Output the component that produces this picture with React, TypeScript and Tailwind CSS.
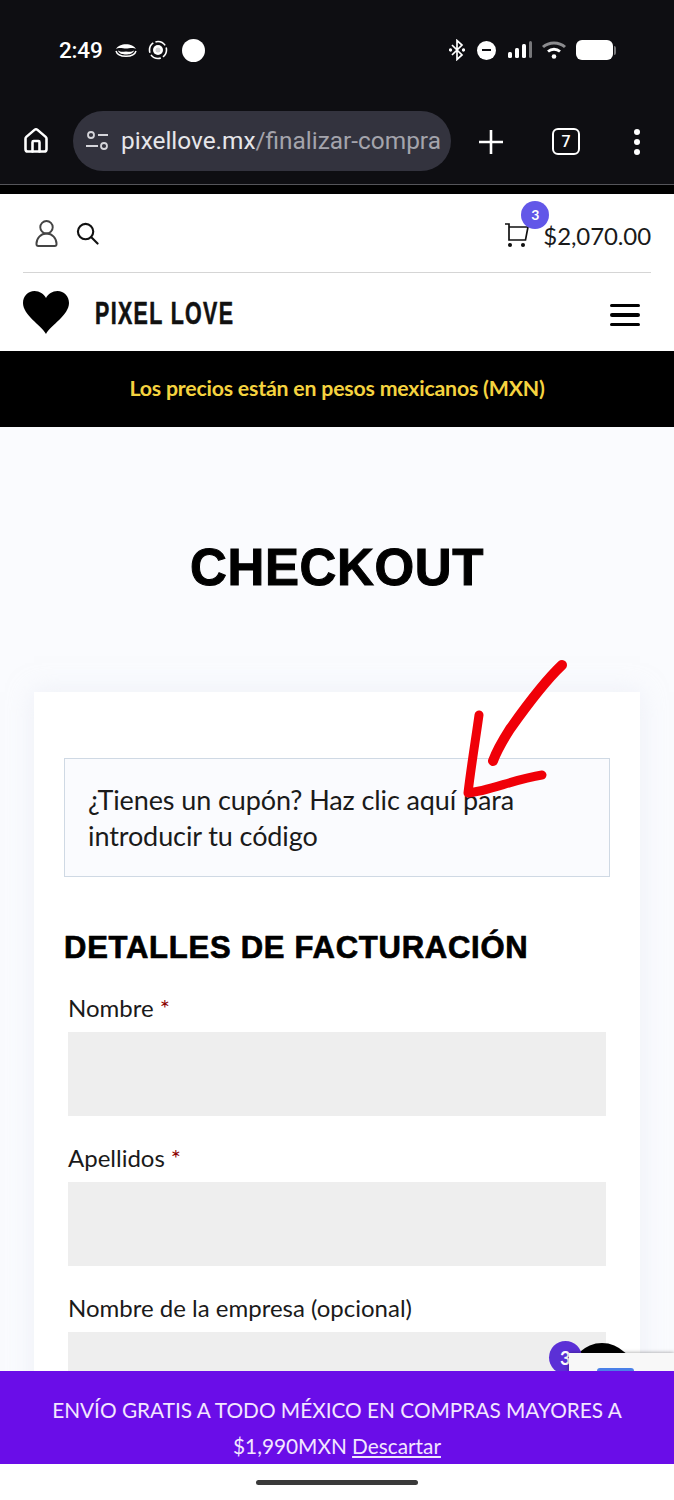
import { House } from 'lucide-react';

function StatusBar() {
  return (
    <div className="h-[100px] pl-[59px] pr-[58px] pt-[36px] flex justify-between items-start text-white">
      <div className="flex items-center h-[28px]">
        <span className="font-['Roboto',sans-serif] font-medium text-[22.500px] leading-[28px] tracking-[-0.2px]">2:49</span>
        {/* notification icons */}
        <svg className="ml-[12px]" width="22" height="16" viewBox="0 0 22 16" fill="none">
          <path d="M1 7C4 .5 18 .5 21 7 18 5 14 6.500 11 6.500 8 6.500 4 5 1 7z" fill="white" />
          <path d="M3 8.500c3 2 5 1 8 1s5 1 8-1c-1 3.500-5 4-8 4s-7-.5-8-4z" fill="white" />
          <path d="M1 9c2 7 18 7 20 0" stroke="white" strokeWidth="1.500" />
        </svg>
        <svg className="ml-[10px]" width="22" height="22" viewBox="0 0 22 22" fill="none">
          <circle cx="11" cy="11" r="5" fill="white" />
          <circle cx="11" cy="11" r="2.500" fill="#cfcfd2" />
          <circle cx="11" cy="11" r="8.500" stroke="white" strokeWidth="1.600" strokeDasharray="11 2.400" strokeDashoffset="3" />
        </svg>
        <span className="ml-[13px] w-[23px] h-[23px] rounded-full bg-white"></span>
      </div>
      <div className="flex items-center h-[28px]">
        <svg width="16" height="22" viewBox="0 0 16 22" fill="none" stroke="white" strokeWidth="1.700">
          <path d="M3 6l10 10-5 4.500V1.500L13 6 3 16" />
          <circle cx="1.500" cy="11" r="0.800" fill="white" />
          <circle cx="14.500" cy="11" r="0.800" fill="white" />
        </svg>
        <span className="ml-[12px] w-[19px] h-[19px] rounded-full bg-white flex items-center justify-center">
          <span className="w-[9px] h-[2.500px] bg-[#0e0e12]"></span>
        </span>
        <svg className="ml-[11px]" width="26" height="20" viewBox="0 0 26 20">
          <rect x="1" y="12" width="4" height="6" rx="1.500" fill="white" />
          <rect x="8" y="8" width="4" height="10" rx="1.500" fill="white" />
          <rect x="15" y="4" width="4" height="14" rx="1.500" fill="white" />
          <rect x="22" y="1" width="3" height="17" rx="1.500" fill="#77777a" />
        </svg>
        <svg className="ml-[8px]" width="26" height="20" viewBox="0 0 26 20" fill="none">
          <path d="M2 7c6-5.500 16-5.500 22 0" stroke="#8c8c8f" strokeWidth="3" />
          <path d="M7 11.500c3.500-3 8.500-3 12 0" stroke="white" strokeWidth="2.800" />
          <circle cx="13" cy="16.500" r="2.300" fill="white" />
        </svg>
        <span className="ml-[9px] w-[37px] h-[20px] rounded-[6px] bg-white"></span>
        <span className="ml-[1px] w-[2px] h-[9px] rounded-r-sm bg-[#77777a]"></span>
      </div>
    </div>
  );
}

function BrowserBar() {
  return (
    <div className="h-[85px] border-b border-[#55555a] flex items-start pt-[11px] pl-[22px]">
      <House className="mt-[16px] text-white" size={28} strokeWidth={2.200} />
      <div className="ml-[23px] w-[378px] h-[60px] rounded-full bg-[#33333e] flex items-center pl-[12px]">
        <svg width="24" height="24" viewBox="0 0 24 24" fill="none" stroke="#d5d5da" strokeWidth="1.800">
          <circle cx="6" cy="6" r="3" />
          <path d="M13 6h10M1 17h12" />
          <circle cx="19" cy="17" r="3" />
        </svg>
        <span className="ml-[12px] font-['Roboto',sans-serif] text-[24.400px] leading-[30px] whitespace-nowrap text-[#e6e6ea]">
          pixellove.mx<span className="text-[#a4a4ac]">/finalizar-compra</span>
        </span>
      </div>
      <svg className="ml-[27px] mt-[18px]" width="26" height="26" viewBox="0 0 26 26" stroke="white" strokeWidth="2.600">
        <path d="M13 1v24M1 13h24" />
      </svg>
      <span className="ml-[48px] mt-[17px] w-[28px] h-[27px] rounded-[6px] border-[2.500px] border-white flex items-center justify-center font-['Roboto',sans-serif] font-medium text-[16px] text-white">
        7
      </span>
      <div className="ml-[54px] mt-[18px] flex flex-col gap-[4px]">
        <span className="w-[6px] h-[6px] rounded-full bg-white"></span>
        <span className="w-[6px] h-[6px] rounded-full bg-white"></span>
        <span className="w-[6px] h-[6px] rounded-full bg-white"></span>
      </div>
    </div>
  );
}

function SiteHeader() {
  return (
    <div className="bg-white h-[157px] px-[23px] font-['Lato',sans-serif]">
      <div className="h-[79px] border-b border-[#d5d5d5] flex items-center justify-between">
        <div className="flex items-center pl-[12px] pt-[1px]">
          <svg width="23" height="29" viewBox="0 0 24 29" fill="none" stroke="#444" strokeWidth="2">
            <circle cx="12" cy="8" r="6.500" />
            <path d="M12 14.500c-6 0-10.500 5-10.500 11 0 1.500.5 2 2 2h17c1.500 0 2-.5 2-2 0-6-4.500-11-10.500-11z" />
          </svg>
          <svg className="ml-[18px]" width="23" height="23" viewBox="0 0 24 24" fill="none" stroke="#111" strokeWidth="2.200" strokeLinecap="round">
            <circle cx="10" cy="10" r="8" />
            <path d="M16 16l6.500 6.500" />
          </svg>
        </div>
        <div className="relative flex items-center pt-[5px]">
          <svg width="24" height="26" viewBox="0 0 24 26" fill="none" stroke="#111" strokeWidth="1.700">
            <path d="M0 1h4v16h16.500L23 4H4" />
            <circle cx="5" cy="22" r="1.200" fill="#111" />
            <circle cx="18" cy="22" r="1.200" fill="#111" />
          </svg>
          <span className="absolute left-[16px] top-[-15px] w-[28px] h-[28px] rounded-full bg-[#6257e8] flex items-center justify-center text-white text-[14px] font-bold">
            3
          </span>
          <span className="ml-[14px] text-[24px] leading-[30px] text-[#1a1a1a] tracking-[-0.1px]">$2,070.00</span>
        </div>
      </div>
      <div className="flex items-center justify-between h-[78px]">
        <div className="flex items-center">
          <svg width="46" height="43" viewBox="0 0 46 43" fill="black">
            <path d="M23 43C18 34 0 24 0 12 0 5 5 0 11.500 0 16.500 0 21 3 23 7 25 3 29.500 0 34.500 0 41 0 46 5 46 12 46 24 28 34 23 43z" />
          </svg>
          <span className="ml-[26px] mt-[3px] origin-left scale-x-[0.69] font-['Liberation_Sans',sans-serif] font-bold [-webkit-text-stroke:0.6px_#111] text-[31px] leading-[34px] tracking-[2px] text-[#111] whitespace-nowrap">
            PIXEL LOVE
          </span>
        </div>
        <div className="mr-[11px] mt-[6px] flex flex-col gap-[6px]">
          <span className="w-[30px] h-[3.500px] rounded-full bg-black"></span>
          <span className="w-[30px] h-[3.500px] rounded-full bg-black"></span>
          <span className="w-[30px] h-[3.500px] rounded-full bg-black"></span>
        </div>
      </div>
    </div>
  );
}

function Field({ label, required }: { label: string; required?: boolean }) {
  return (
    <div className="px-[4px] mb-[25px]">
      <div className="text-[24px] leading-[34px] text-[#1a1a1a] h-[36px]">
        {label}
        {required && <span className="text-[#8b0000] ml-[6px]">*</span>}
      </div>
      <div className="mt-[5px] h-[84px] bg-[#eeeeee]"></div>
    </div>
  );
}

export default function App() {
  return (
    <div className="relative w-[674px] h-[1500px] overflow-hidden flex flex-col bg-white font-['Lato',sans-serif]">
      <div className="bg-[#0e0e12] shrink-0">
        <StatusBar />
        <BrowserBar />
      </div>
      <div className="h-[9px] bg-black shrink-0"></div>
      <SiteHeader />
      <div className="h-[76px] shrink-0 bg-black flex items-center justify-center text-[#f5d33f] text-[21.300px] font-bold tracking-[-0.2px]">
        Los precios están en pesos mexicanos (MXN)
      </div>

      <main className="relative flex-1 min-h-0 overflow-hidden bg-[#fafbfe] pt-[109px] px-[34px]">
        <h1 className="text-center text-[51px] leading-[64px] font-bold text-black font-['Liberation_Sans',sans-serif] [-webkit-text-stroke:1px_black] tracking-[0.6px]">
          CHECKOUT
        </h1>
        <div className="mt-[92px] bg-white shadow-[0_0_24px_rgba(225,230,240,0.5)] px-[30px] pt-[66px] h-[900px]">
          <div className="border border-[#cfd9e4] bg-[#fafbfe] px-[23px] pt-[23px] pb-[22px] text-[27px] leading-[36px] text-[#1a1a1a] tracking-[-0.1px]">
            ¿Tienes un cupón? Haz clic aquí para introducir tu código
          </div>
          <h2 className="mt-[52px] mb-[24px] text-[31px] leading-[38px] font-bold text-black font-['Liberation_Sans',sans-serif] [-webkit-text-stroke:0.7px_black] tracking-[0.75px] whitespace-nowrap">
            DETALLES DE FACTURACIÓN
          </h2>
          <Field label="Nombre" required />
          <Field label="Apellidos" required />
          <Field label="Nombre de la empresa (opcional)" />
        </div>

        {/* floating cart button, recaptcha badge peeking over the bar */}
        <div className="absolute left-[570px] top-[916px] w-[64px] h-[64px] rounded-full bg-black"></div>
        <div className="absolute left-[549px] top-[914px] w-[33px] h-[33px] rounded-full bg-[#5b30d6] text-white font-bold text-[18px] pl-[11px] leading-[34px]">3</div>
        <div className="absolute left-[569px] top-[926px] w-[105px] h-[40px] bg-[#f8f8f8] shadow-[0_0_4px_rgba(0,0,0,0.4)] pl-[28px] pt-[15px]">
          <div className="w-[37px] h-[6px] rounded-t-[3px] bg-[#4a80e8]"></div>
        </div>
      </main>

      <div className="shrink-0 h-[93px] bg-[#6a0de8] pt-[21px] flex flex-col items-center text-[20.800px] leading-[36px] text-[#f3e6ff]">
        <div className="whitespace-nowrap">ENVÍO GRATIS A TODO MÉXICO EN COMPRAS MAYORES A</div>
        <div className="whitespace-nowrap">
          $1,990MXN <span className="underline">Descartar</span>
        </div>
      </div>
      <div className="shrink-0 h-[36px] bg-white flex items-center justify-center">
        <span className="w-[162px] h-[5px] rounded-full bg-[#3a3a3a]"></span>
      </div>

      {/* red arrow drawn over the screenshot */}
      <svg className="absolute left-[455px] top-[655px]" width="115" height="150" viewBox="0 0 115 150" fill="none" stroke="#f00008" strokeLinecap="round" strokeLinejoin="round">
        <path d="M107 10C90 26 72 50 55 74 48 85 42 95 38 106" strokeWidth="10" />
        <path d="M24 60C21 82 16 112 13 138 34 136 60 124 87 120" strokeWidth="9" />
      </svg>
    </div>
  );
}
